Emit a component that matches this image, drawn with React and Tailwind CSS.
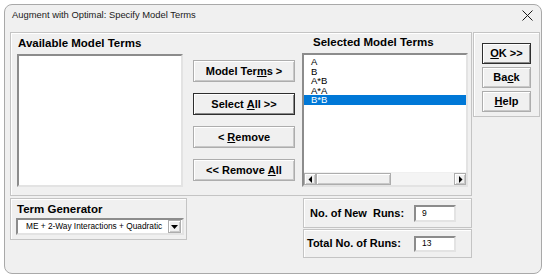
import React from "react";

const raised =
  "bg-[#f0f0f0] border border-[#adadad] shadow-[inset_1px_1px_0_#ffffff,inset_-1px_-1px_0_#c8c8c8]";
const sunken =
  "bg-white border-2 border-t-[#8c8c8c] border-l-[#8c8c8c] border-r-[#e3e3e3] border-b-[#e3e3e3]";
const etched = "border border-[#c4c4c4] shadow-[inset_1px_1px_0_#ffffff]";

function Btn({ children, focused, className = "" }) {
  return (
    <div
      className={`flex items-center justify-center font-bold text-[11px] text-black ${raised} ${
        focused ? "!border-[#2e2e2e] !shadow-[inset_1px_1px_0_#ffffff,inset_-1px_-1px_0_#8a8a8a]" : ""
      } ${className}`}
    >
      {children}
    </div>
  );
}

function ArrowBox({ dir }) {
  return (
    <div className={`w-[12px] h-full flex items-center justify-center ${raised}`}>
      <svg width="5" height="7" viewBox="0 0 5 7">
        {dir === "left" ? (
          <polygon points="4,0 4,7 0.5,3.5" fill="#000" />
        ) : (
          <polygon points="1,0 1,7 4.5,3.5" fill="#000" />
        )}
      </svg>
    </div>
  );
}

export default function App() {
  const selected = ["A", "B", "A*B", "A*A", "B*B"];

  return (
    <div
      className="w-[545px] h-[277px] bg-white pt-[4px] pl-[4px] text-black"
      style={{ fontFamily: '"Liberation Sans", Arial, sans-serif' }}
    >
      <div className="w-[538px] h-[270px] rounded-[8px] border border-[#a9a9a9] bg-[#f0f0f0] flex flex-col overflow-hidden">
        {/* Title bar */}
        <div className="h-[27px] flex items-center justify-between pl-[7px] pr-[8px] pb-[6px]">
          <span className="text-[9.4px] text-[#1a1a1a]">
            Augment with Optimal: Specify Model Terms
          </span>
          <svg width="11" height="11" viewBox="0 0 11 11">
            <path d="M0.5 0.5 L10.5 10.5 M10.5 0.5 L0.5 10.5" stroke="#1a1a1a" strokeWidth="1" />
          </svg>
        </div>

        {/* Main row */}
        <div className="flex pl-[5px] gap-[1px]">
          <div className={`w-[462px] h-[164px] flex pl-[6px] ${etched}`}>
            {/* Available */}
            <div className="w-[166px] flex flex-col">
              <div className="h-[21px] flex items-center pl-[1px] font-bold text-[11.5px]">
                Available Model Terms
              </div>
              <div className={`h-[133px] ${sunken}`} />
            </div>

            {/* Buttons */}
            <div className="ml-[10px] w-[102px] pt-[27px] flex flex-col gap-[11px]">
              <Btn className="h-[22px]">
                Model Ter<span className="underline">m</span>s &gt;
              </Btn>
              <Btn className="h-[22px]" focused>
                Select <span className="underline ml-[3px]">A</span>ll &gt;&gt;
              </Btn>
              <Btn className="h-[22px]">
                &lt; <span className="underline ml-[3px]">R</span>emove
              </Btn>
              <Btn className="h-[22px]">
                &lt;&lt; Remove <span className="underline ml-[3px]">A</span>ll
              </Btn>
            </div>

            {/* Selected */}
            <div className="ml-[7px] w-[166px] flex flex-col">
              <div className="h-[20px] flex items-center pl-[11px] font-bold text-[11.5px]">
                Selected Model Terms
              </div>
              <div className={`h-[134px] flex flex-col ${sunken}`}>
                <div className="flex-1 pt-[2px]">
                  {selected.map((t, i) => (
                    <div
                      key={t}
                      className={`h-[9.5px] leading-[9.5px] text-[9.5px] pl-[7px] ${
                        i === selected.length - 1 ? "bg-[#0078d7] text-white" : ""
                      }`}
                    >
                      {t}
                    </div>
                  ))}
                </div>
                <div className="h-[13px] flex bg-[#f0f0f0] border-t border-[#f0f0f0]">
                  <ArrowBox dir="left" />
                  <div className={`w-[75px] h-full ${raised}`} />
                  <div className="flex-1 bg-[#f4f4f4]" />
                  <ArrowBox dir="right" />
                </div>
              </div>
            </div>
          </div>

          {/* Right buttons */}
          <div className={`w-[67px] h-[85px] pl-[8px] pt-[10px] flex flex-col gap-[3px] ${etched}`}>
            <Btn className="w-[49px] h-[21px]" focused>
              <span className="underline">O</span>K &gt;&gt;
            </Btn>
            <Btn className="w-[49px] h-[21px]">
              Ba<span className="underline">c</span>k
            </Btn>
            <Btn className="w-[49px] h-[21px]">
              <span className="underline">H</span>elp
            </Btn>
          </div>
        </div>

        {/* Bottom row */}
        <div className="flex pl-[5px] mt-[2px]">
          <div className={`w-[177px] h-[42px] pt-[3px] ${etched}`}>
            <div className="h-[16px] flex items-center pl-[6px] font-bold text-[11.5px]">
              Term Generator
            </div>
            <div className={`ml-[5px] w-[168px] h-[17px] flex items-center pl-[8px] pr-[1px] ${sunken}`}>
              <span className="flex-1 text-[8.3px] whitespace-nowrap">
                ME + 2-Way Interactions + Quadratic
              </span>
              <div className={`w-[13px] h-[13px] flex items-center justify-center ${raised}`}>
                <svg width="7" height="4" viewBox="0 0 7 4">
                  <polygon points="0,0 7,0 3.5,4" fill="#000" />
                </svg>
              </div>
            </div>
          </div>

          <div className="ml-[116px] w-[169px] flex flex-col gap-[1px]">
            <div className={`h-[30px] flex items-center pl-[6px] ${etched}`}>
              <div className="w-[104px] font-bold text-[11px]">
                No. of New&nbsp; Runs:
              </div>
              <div className={`w-[42px] h-[17px] flex items-center pl-[6px] text-[8.5px] ${sunken}`}>
                9
              </div>
            </div>
            <div className={`h-[29px] flex items-center pl-[3px] ${etched}`}>
              <div className="w-[107px] font-bold text-[11px]">Total No. of Runs:</div>
              <div className={`w-[42px] h-[16px] flex items-center pl-[6px] text-[8.5px] ${sunken}`}>
                13
              </div>
            </div>
          </div>
        </div>
      </div>
    </div>
  );
}
